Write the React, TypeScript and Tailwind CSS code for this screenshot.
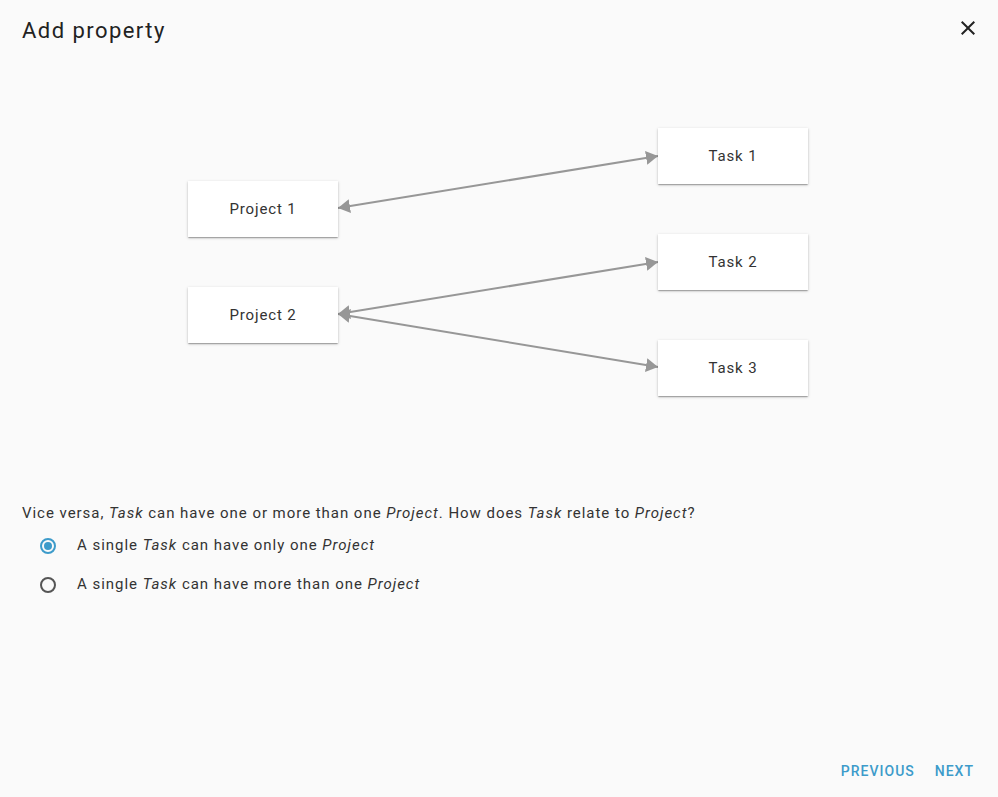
import React from "react";

const font = { fontFamily: "Roboto, 'Liberation Sans', sans-serif" };

interface Node {
  label: string;
  left: string;
  top: string;
}

// positions on the 622x268 canvas
const nodes: Node[] = [
  { label: "Project 1", left: "left-0", top: "top-[53px]" },
  { label: "Project 2", left: "left-0", top: "top-[159px]" },
  { label: "Task 1", left: "left-[470px]", top: "top-0" },
  { label: "Task 2", left: "left-[470px]", top: "top-[106px]" },
  { label: "Task 3", left: "left-[470px]", top: "top-[212px]" },
];

const links = [
  { x1: 150, y1: 80, x2: 470, y2: 28 },
  { x1: 150, y1: 186, x2: 470, y2: 134 },
  { x1: 150, y1: 186, x2: 470, y2: 239 },
];

function Radio({ checked }: { checked: boolean }) {
  return (
    <span
      className={`flex h-[16px] w-[16px] shrink-0 items-center justify-center rounded-full border-2 ${
        checked ? "border-[#3d9bca]" : "border-[#555555]"
      }`}
    >
      {checked && <span className="h-[8px] w-[8px] rounded-full bg-[#3d9bca]" />}
    </span>
  );
}

export default function App() {
  return (
    <div className="flex h-[797px] w-full flex-col bg-[#fafafa] text-[#333333]" style={font}>
      <div className="flex items-start justify-between pl-[22px] pr-[18px] pt-[15px]">
        <h2 className="text-[22px] leading-[32px] font-normal tracking-[1.45px] text-[#222222]">
          Add property
        </h2>
        <button className="mt-[1px] text-[#222222]" aria-label="close">
          <svg width="24" height="24" viewBox="0 0 24 24" fill="currentColor">
            <path d="M19 6.41L17.59 5 12 10.59 6.41 5 5 6.41 10.59 12 5 17.59 6.41 19 12 13.41 17.59 19 19 17.59 13.41 12z" />
          </svg>
        </button>
      </div>

      <div className="relative mx-auto mt-[81px] h-[268px] w-[622px]">
        <svg className="absolute inset-0" width="622" height="268">
          <defs>
            <marker
              id="head"
              viewBox="0 0 12 14"
              refX="12"
              refY="7"
              markerWidth="12"
              markerHeight="14"
              markerUnits="userSpaceOnUse"
              orient="auto-start-reverse"
            >
              <path d="M0 0 L12 7 L0 14 z" fill="#979797" />
            </marker>
          </defs>
          {links.map((l, i) => (
            <line
              key={i}
              x1={l.x1}
              y1={l.y1}
              x2={l.x2}
              y2={l.y2}
              stroke="#979797"
              strokeWidth="2"
              markerStart="url(#head)"
              markerEnd="url(#head)"
            />
          ))}
        </svg>
        {nodes.map((n) => (
          <div
            key={n.label}
            className={`absolute ${n.left} ${n.top} flex h-[56px] w-[150px] items-center justify-center bg-white text-[15px] tracking-[0.85px] text-[#333333] shadow-[0_1px_3px_rgba(0,0,0,0.2),0_1px_1px_rgba(0,0,0,0.14),0_2px_1px_-1px_rgba(0,0,0,0.12)]`}
          >
            {n.label}
          </div>
        ))}
      </div>

      <p className="mt-[106px] pl-[22px] text-[15px] leading-[22px] tracking-[0.96px]">
        Vice versa, <i>Task</i> can have one or more than one <i>Project</i>. How does <i>Task</i>{" "}
        relate to <i>Project</i>?
      </p>

      <div className="mt-[2px] flex flex-col pl-[40px]">
        <label className="flex h-[39px] items-center gap-[21px] text-[15px] tracking-[0.97px]">
          <Radio checked />
          <span>
            A single <i>Task</i> can have only one <i>Project</i>
          </span>
        </label>
        <label className="flex h-[39px] items-center gap-[21px] text-[15px] tracking-[0.97px]">
          <Radio checked={false} />
          <span>
            A single <i>Task</i> can have more than one <i>Project</i>
          </span>
        </label>
      </div>

      <div className="flex-1" />

      <div className="flex items-center justify-end gap-[4px] pb-[8px] pr-[16px]">
        <button className="h-[36px] px-[8px] text-[14px] font-medium uppercase tracking-[1px] text-[#3d9bca]">
          Previous
        </button>
        <button className="h-[36px] px-[8px] text-[14px] font-medium uppercase tracking-[1px] text-[#3d9bca]">
          Next
        </button>
      </div>
    </div>
  );
}
